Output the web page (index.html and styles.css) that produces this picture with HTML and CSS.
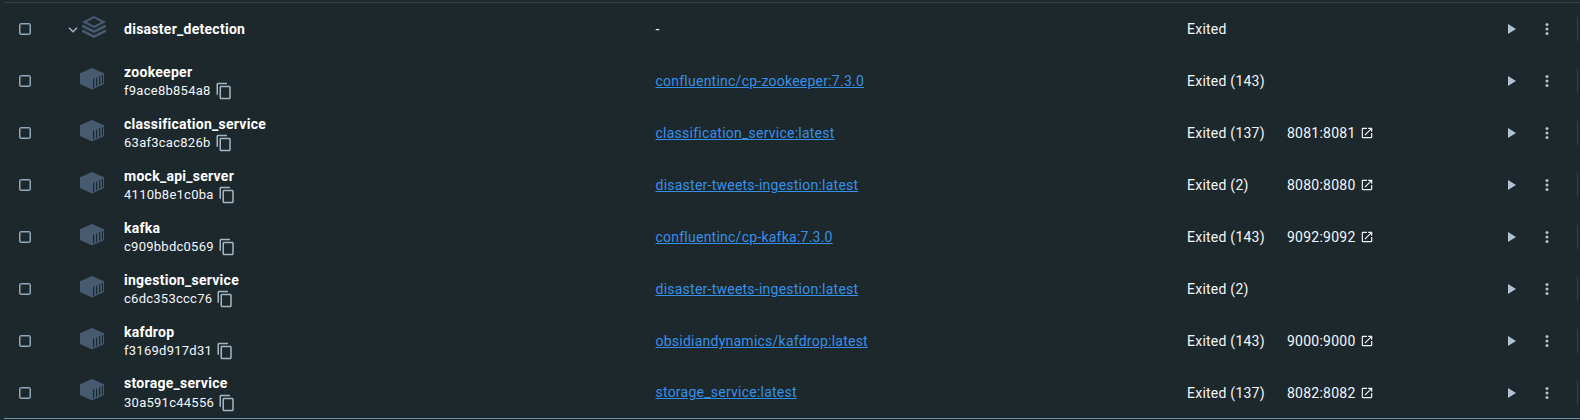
FILE: index.html
```html
<!DOCTYPE html>
<html lang="en">
<head>
<meta charset="utf-8">
<title>Containers</title>
<link rel="stylesheet" href="styles.css">
</head>
<body>
<svg class="defs" aria-hidden="true">
  <symbol id="chevron" viewBox="0 0 10 6"><path d="M1 .8 5 4.8 9 .8" fill="none" stroke="currentColor" stroke-width="1.4"/></symbol>
  <symbol id="stack" viewBox="0 0 24 22"><path fill="currentColor" fill-rule="evenodd" d="M12 0 24 6 12 12 0 6ZM12 2.300 4.800 6 12 9.700 19.200 6Z"/><path fill="currentColor" d="M0 9.200 1.800 9 12 14.300 22.200 9 24 9.200V11.200L12 17 0 11.200ZM0 14.100 1.800 13.900 12 19.200 22.200 13.900 24 14.100V16.100L12 22 0 16.100Z"/></symbol>
  <symbol id="box" viewBox="0 0 24 22"><path fill="currentColor" d="M12 0 24 5.2V16L12 21.6 0 16V5.2Z"/><path class="slats" d="M13.6 10.6V19.4M16.600 9.4V18M19.600 8V16.6M22.4 6.9V15.4"/></symbol>
  <symbol id="copy" viewBox="0 0 24 24"><path fill="currentColor" d="M16 1H4c-1.100 0-2 .9-2 2v14h2V3h12V1zm3 4H8c-1.100 0-2 .9-2 2v14c0 1.100.9 2 2 2h11c1.100 0 2-.9 2-2V7c0-1.100-.9-2-2-2zm0 16H8V7h11v14z"/></symbol>
  <symbol id="open" viewBox="0 0 24 24"><path fill="currentColor" d="M19 19H5V5h7V3H5c-1.110 0-2 .9-2 2v14c0 1.100.89 2 2 2h14c1.100 0 2-.9 2-2v-7h-2v7zM14 3v2h3.590l-9.830 9.830 1.410 1.410L19 6.410V10h2V3h-7z"/></symbol>
  <symbol id="play" viewBox="0 0 8 10"><path fill="currentColor" d="M0 0 8 5 0 10Z"/></symbol>
  <symbol id="more" viewBox="0 0 4 12"><g fill="currentColor"><circle cx="2" cy="1.5" r="1.5"/><circle cx="2" cy="6" r="1.5"/><circle cx="2" cy="10.500" r="1.5"/></g></symbol>
</svg>
<main class="table">
  <div class="row group">
    <span class="check"></span>
    <span class="kind"><svg class="chevron"><use href="#chevron"/></svg><svg class="stack"><use href="#stack"/></svg></span>
    <div class="title"><b class="name">disaster_detection</b></div>
    <span>-</span><span>Exited</span><span></span>
    <svg class="play"><use href="#play"/></svg><svg class="more"><use href="#more"/></svg><i class="edge"></i>
  </div>
  <div class="row">
    <span class="check"></span>
    <span class="kind"><svg class="box"><use href="#box"/></svg></span>
    <div class="title"><b class="name">zookeeper</b><span class="id">f9ace8b854a8<svg class="copy"><use href="#copy"/></svg></span></div>
    <span><a class="image">confluentinc/cp-zookeeper:7.3.0</a></span><span>Exited (143)</span><span></span>
    <svg class="play"><use href="#play"/></svg><svg class="more"><use href="#more"/></svg><i class="edge"></i>
  </div>
  <div class="row">
    <span class="check"></span>
    <span class="kind"><svg class="box"><use href="#box"/></svg></span>
    <div class="title"><b class="name">classification_service</b><span class="id">63af3cac826b<svg class="copy"><use href="#copy"/></svg></span></div>
    <span><a class="image">classification_service:latest</a></span><span>Exited (137)</span><span class="port">8081:8081<svg class="open"><use href="#open"/></svg></span>
    <svg class="play"><use href="#play"/></svg><svg class="more"><use href="#more"/></svg><i class="edge"></i>
  </div>
  <div class="row">
    <span class="check"></span>
    <span class="kind"><svg class="box"><use href="#box"/></svg></span>
    <div class="title"><b class="name">mock_api_server</b><span class="id">4110b8e1c0ba<svg class="copy"><use href="#copy"/></svg></span></div>
    <span><a class="image">disaster-tweets-ingestion:latest</a></span><span>Exited (2)</span><span class="port">8080:8080<svg class="open"><use href="#open"/></svg></span>
    <svg class="play"><use href="#play"/></svg><svg class="more"><use href="#more"/></svg><i class="edge"></i>
  </div>
  <div class="row">
    <span class="check"></span>
    <span class="kind"><svg class="box"><use href="#box"/></svg></span>
    <div class="title"><b class="name">kafka</b><span class="id">c909bbdc0569<svg class="copy"><use href="#copy"/></svg></span></div>
    <span><a class="image">confluentinc/cp-kafka:7.3.0</a></span><span>Exited (143)</span><span class="port">9092:9092<svg class="open"><use href="#open"/></svg></span>
    <svg class="play"><use href="#play"/></svg><svg class="more"><use href="#more"/></svg><i class="edge"></i>
  </div>
  <div class="row">
    <span class="check"></span>
    <span class="kind"><svg class="box"><use href="#box"/></svg></span>
    <div class="title"><b class="name">ingestion_service</b><span class="id">c6dc353ccc76<svg class="copy"><use href="#copy"/></svg></span></div>
    <span><a class="image">disaster-tweets-ingestion:latest</a></span><span>Exited (2)</span><span></span>
    <svg class="play"><use href="#play"/></svg><svg class="more"><use href="#more"/></svg><i class="edge"></i>
  </div>
  <div class="row">
    <span class="check"></span>
    <span class="kind"><svg class="box"><use href="#box"/></svg></span>
    <div class="title"><b class="name">kafdrop</b><span class="id">f3169d917d31<svg class="copy"><use href="#copy"/></svg></span></div>
    <span><a class="image">obsidiandynamics/kafdrop:latest</a></span><span>Exited (143)</span><span class="port">9000:9000<svg class="open"><use href="#open"/></svg></span>
    <svg class="play"><use href="#play"/></svg><svg class="more"><use href="#more"/></svg><i class="edge"></i>
  </div>
  <div class="row last">
    <span class="check"></span>
    <span class="kind"><svg class="box"><use href="#box"/></svg></span>
    <div class="title"><b class="name">storage_service</b><span class="id">30a591c44556<svg class="copy"><use href="#copy"/></svg></span></div>
    <span class="ref"><a class="image">storage_service:latest</a></span><span>Exited (137)</span><span class="port">8082:8082<svg class="open"><use href="#open"/></svg></span>
    <svg class="play"><use href="#play"/></svg><svg class="more"><use href="#more"/></svg><i class="edge"></i>
  </div>
</main>
</body>
</html>
```
FILE: styles.css
```css
* { box-sizing: border-box; }
body {
  margin: 0;
  height: 420px;
  overflow: hidden;
  background: #1d282d;
  color: #f4f6f8;
  font: 14px/20px Roboto, sans-serif;
  letter-spacing: 0.24px;
}
svg { display: block; flex: none; }
.defs { width: 0; height: 0; position: absolute; }
.table {
  margin: 2px 0 0 4px;
  height: 417px;
  border-top: 1px solid #323f48;
  border-bottom: 1px solid #6f93a9;
}
.row {
  display: grid;
  grid-template-columns: 56px 60px 531.5px 531.5px 100px 221px 37px 32px 2px;
  align-items: center;
  height: 52px;
  padding-left: 4px;
}
.check {
  width: 12px;
  height: 12px;
  margin-left: 11px;
  border: 1px solid #8fa9bb;
  border-radius: 1.5px;
  box-shadow: inset 0 0 0 0.5px #8fa9bb;
}
.kind { display: flex; align-items: center; color: #475b70; }
.chevron { width: 10px; height: 6px; margin: 2px 4px 0; color: #a4b7c4; }
.stack { width: 24px; height: 22px; margin-bottom: 4px; }
.box { width: 24px; height: 22px; margin: 0 0 5px 16px; }
.slats { fill: none; stroke: #1d282d; stroke-width: 1.2; }
.name { display: block; font-weight: 700; line-height: 20px; letter-spacing: 0.27px; color: #fff; }
.id {
  display: flex;
  align-items: center;
  height: 18px;
  font-size: 13px;
  letter-spacing: 0.26px;
}
.copy { width: 18px; height: 18px; margin-left: 4px; color: #a3b6c4; }
.image { color: #3790e8; text-decoration: underline; }
.port { display: flex; align-items: center; gap: 4px; }
.open { width: 14px; height: 14px; }
.play { width: 8px; height: 10px; color: #afc2cf; }
.more { width: 4px; height: 12px; color: #afc2cf; }
.edge { width: 1px; height: 24px; background: #35434c; }
.last .kind, .last .ref { margin-bottom: 2px; }
.last .name { line-height: 18px; padding-bottom: 2px; }
```
